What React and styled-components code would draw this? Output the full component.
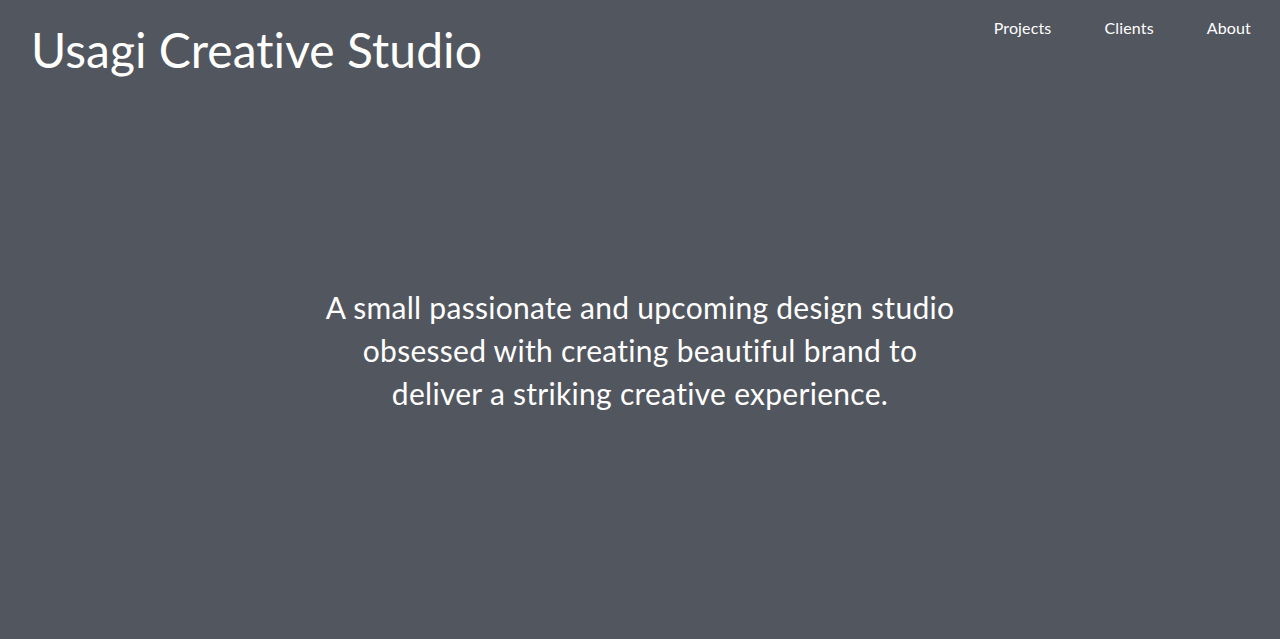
import React from "react";
import styled, { createGlobalStyle } from "styled-components";

const Global = createGlobalStyle`
  html, body { margin: 0; padding: 0; }
  body {
    background: #52565e;
    font-family: Lato, "Open Sans", sans-serif;
    color: #ffffff;
    font-variant-ligatures: none;
    font-feature-settings: "liga" 0, "clig" 0;
  }
`;

const Page = styled.div`
  min-height: 639px;
  display: flex;
  flex-direction: column;
  background: #52565e;
`;

const Header = styled.header`
  display: flex;
  justify-content: space-between;
  align-items: flex-start;
  padding: 22px 29px 0 31px;
`;

const Title = styled.h1`
  margin: 0;
  font-weight: 400;
  font-size: 48px;
  line-height: 56px;
  letter-spacing: 0.05px;
`;

const Nav = styled.nav`
  display: flex;
  gap: 53px;
  margin-top: -4px;
`;

const NavLink = styled.a`
  font-size: 16px;
  line-height: 20px;
  letter-spacing: 0.15px;
  color: #ffffff;
  text-decoration: none;
`;

const Hero = styled.main`
  flex: 1;
  display: flex;
  justify-content: center;
  padding-top: 208px;
`;

const Tagline = styled.p`
  margin: 0;
  width: 660px;
  text-align: center;
  font-size: 30px;
  line-height: 43px;
  letter-spacing: 0.28px;
`;

export default function App() {
  return (
    <Page>
      <Global />
      <Header>
        <Title>Usagi Creative Studio</Title>
        <Nav>
          <NavLink href="#">Projects</NavLink>
          <NavLink href="#">Clients</NavLink>
          <NavLink href="#">About</NavLink>
        </Nav>
      </Header>
      <Hero>
        <Tagline>
          A small passionate and upcoming design studio
          <br />
          obsessed with creating beautiful brand to
          <br />
          deliver a striking creative experience.
        </Tagline>
      </Hero>
    </Page>
  );
}
